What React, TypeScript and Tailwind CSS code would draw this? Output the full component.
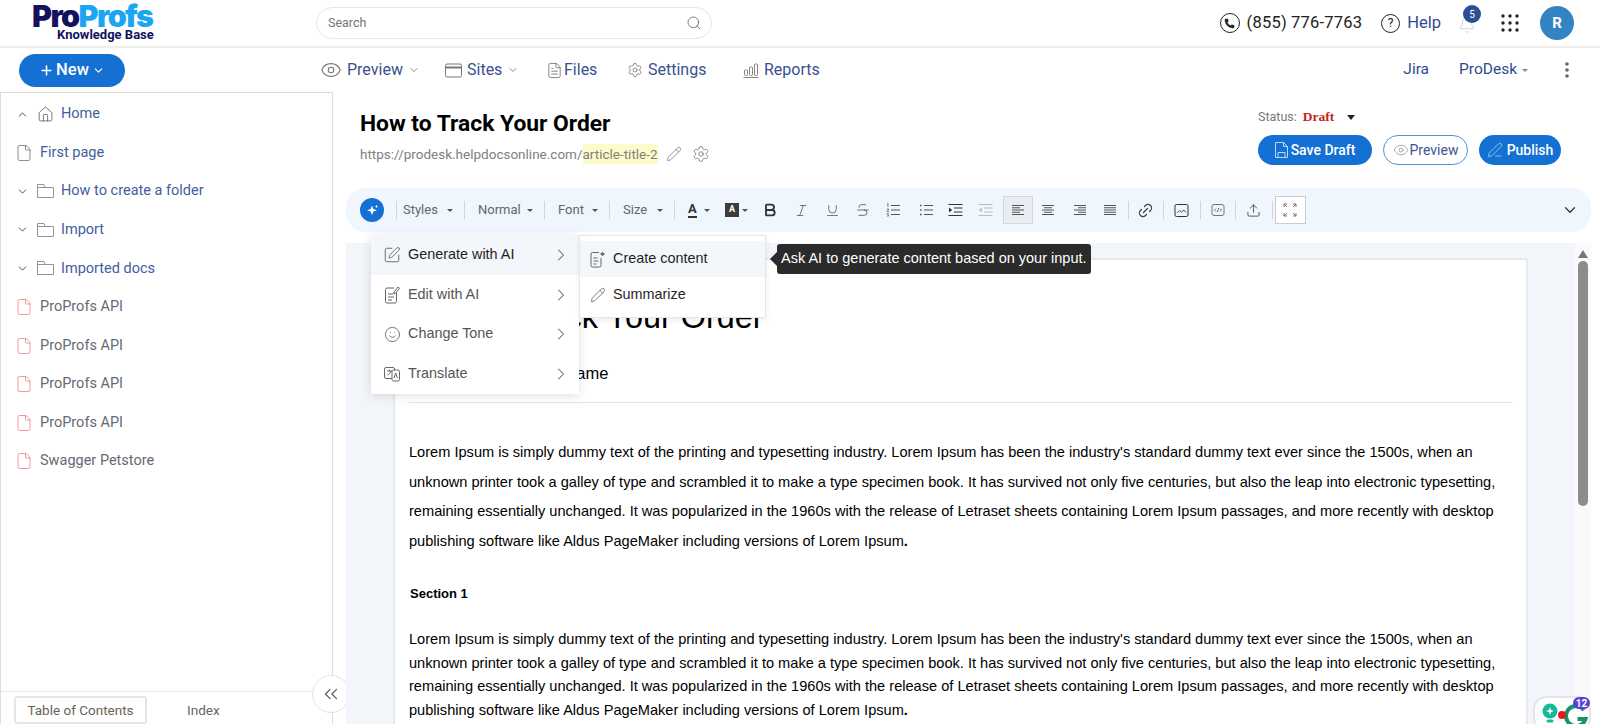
import {
  Bell,
  Bold,
  ChevronDown,
  ChevronRight,
  ChevronUp,
  ChevronsLeft,
  Eye,
  File,
  FileText,
  Home,
  Italic,
  Link2,
  Pencil,
  PenLine,
  Phone,
  Plus,
  Search,
  Settings,
  Smile,
  SquarePen,
  Strikethrough,
  Underline,
  Upload,
} from "lucide-react";

const lorem =
  "Lorem Ipsum is simply dummy text of the printing and typesetting industry. Lorem Ipsum has been the industry's standard dummy text ever since the 1500s, when an unknown printer took a galley of type and scrambled it to make a type specimen book. It has survived not only five centuries, but also the leap into electronic typesetting, remaining essentially unchanged. It was popularized in the 1960s with the release of Letraset sheets containing Lorem Ipsum passages, and more recently with desktop publishing software like Aldus PageMaker including versions of Lorem Ipsum";

function Caret({ className = "" }: { className?: string }) {
  return <span className={`inline-block border-x-[3px] border-t-[3.5px] border-x-transparent border-t-[#555] ${className}`} />;
}

function Header() {
  return (
    <header className="flex h-[48px] shrink-0 items-center border-b-2 border-[#eeeeee] pl-8 pr-[26px]">
      {/* Logo */}
      <div className="mb-[4px] flex w-[284px] shrink-0 flex-col">
        <div className="flex items-center text-[30.5px] font-black leading-[30px] tracking-[-1.6px] font-['Inter',sans-serif]">
          <span className="text-[#14125f]">Pro</span>
          <span className="text-[#1ba6f2]">Profs</span>
        </div>
        <div className="ml-[25px] -mt-[3px] text-[13px] font-bold leading-[14px] text-[#14125f]">Knowledge Base</div>
      </div>
      <div className="flex h-[32px] w-[396px] items-center justify-between rounded-full border border-[#e6e6e6] pl-[11px] pr-[9px] text-[12.5px] text-[#757575]">
        <span>Search</span>
        <Search size={16} strokeWidth={1.25} className="text-[#666]" />
      </div>
      <div className="ml-auto flex items-center">
        <span className="flex h-5 w-5 items-center justify-center rounded-full border border-[#222]">
          <Phone size={11} fill="#222" strokeWidth={1} className="text-[#222]" />
        </span>
        <span className="ml-[7px] text-[16.5px] tracking-[0.2px] text-[#222]">(855) 776-7763</span>
        <span className="ml-[19px] flex h-[19px] w-[19px] items-center justify-center rounded-full border border-[#222] text-[12px] text-[#222]">?</span>
        <span className="ml-[7px] text-[16.5px] text-[#2f4a8f]">Help</span>
        <div className="relative ml-[17px] h-6 w-6">
          <Bell size={18} strokeWidth={1} className="absolute left-0 top-[5px] text-[#c4c4c4]" />
          <span className="absolute left-[5px] top-[-6px] flex h-[18px] w-[18px] items-center justify-center rounded-full bg-[#2c4f94] text-[10px] text-white">5</span>
        </div>
        <svg width="18" height="18" viewBox="0 0 18 18" fill="#222" className="ml-[19px]">
          {[2, 9, 16].flatMap((y) => [2, 9, 16].map((x) => <circle key={`${x}-${y}`} cx={x} cy={y} r="1.7" />))}
        </svg>
        <span className="ml-[21px] flex h-[34px] w-[34px] items-center justify-center rounded-full bg-[#3484c4] text-[15px] font-bold text-white">R</span>
      </div>
    </header>
  );
}

function NavLink({ icon, label, caret, className = "" }: { icon: React.ReactNode; label: string; caret?: boolean; className?: string }) {
  return (
    <div className={`flex items-center ${className}`}>
      {icon}
      <span className="text-[16px] text-[#3b5090]">{label}</span>
      {caret && <ChevronDown size={12} strokeWidth={1.25} className="ml-[5px] text-[#444]" />}
    </div>
  );
}

function SiteIcon() {
  return (
    <svg width="17" height="15" viewBox="0 0 17 15" fill="none" stroke="#777" className="mr-[5px]">
      <rect x="0.5" y="1" width="16" height="13" rx="1.5" />
      <path d="M1 4.5h15" strokeWidth="2" />
    </svg>
  );
}

function ReportsIcon() {
  return (
    <svg width="16" height="15" viewBox="0 0 16 15" fill="none" stroke="#777" strokeWidth="0.9" className="mr-[5px]">
      <rect x="1.5" y="7" width="3" height="5.5" rx="1" />
      <rect x="6.5" y="4" width="3" height="8.5" rx="1" />
      <rect x="11.5" y="1" width="3" height="11.5" rx="1" />
      <path d="M0.5 14.5h15" />
    </svg>
  );
}

function NavBar() {
  return (
    <div className="flex h-[44px] shrink-0 items-center pl-[19px] pr-[31px]">
      <button className="flex h-[33px] w-[106px] items-center justify-center rounded-full bg-[#1570d3] text-[16.5px] font-medium text-white">
        <Plus size={15} strokeWidth={2.5} />
        <span className="ml-[2px]">New</span>
        <ChevronDown size={13} strokeWidth={2} className="ml-[3px]" />
      </button>
      <div className="ml-[195px] flex items-center">
        <NavLink icon={<Eye size={22} strokeWidth={1.25} className="mr-[5px] text-[#777]" />} label="Preview" caret className="w-[125px]" />
        <NavLink icon={<SiteIcon />} label="Sites" caret className="w-[101px]" />
        <NavLink icon={<FileText size={17} strokeWidth={1.25} className="mr-[1px] text-[#777]" />} label="Files" className="w-[81px]" />
        <NavLink icon={<Settings size={16} strokeWidth={1.25} className="mr-[5px] text-[#777]" />} label="Settings" className="w-[116px]" />
        <NavLink icon={<ReportsIcon />} label="Reports" />
      </div>
      <div className="ml-auto flex items-center">
        <span className="text-[15.5px] text-[#2f4a8f]">Jira</span>
        <span className="ml-[30px] text-[15.5px] text-[#2f4a8f]">ProDesk</span>
        <Caret className="ml-[5px] border-t-[#888]" />
        <svg width="4" height="16" viewBox="0 0 4 16" fill="#666" className="ml-[37px]">
          <circle cx="2" cy="2" r="1.8" />
          <circle cx="2" cy="8" r="1.8" />
          <circle cx="2" cy="14" r="1.8" />
        </svg>
      </div>
    </div>
  );
}

function FolderIcon() {
  return (
    <svg width="17" height="14" viewBox="0 0 17 14" fill="none" stroke="#888" strokeWidth="0.9">
      <path d="M.5 13.5V.5h6.5l1 3h8.5v10ZM.5 3.5h7.5" />
    </svg>
  );
}

function FolderRow({ label }: { label: string }) {
  return (
    <div className="flex h-[38.55px] items-center pl-[15px]">
      <ChevronDown size={13} strokeWidth={1.75} className="text-[#444]" />
      <span className="ml-[8px] flex"><FolderIcon /></span>
      <span className="ml-[7px] text-[14.5px] text-[#3f5ea0]">{label}</span>
    </div>
  );
}

function PageRow({ label }: { label: string }) {
  return (
    <div className="flex h-[38.55px] items-center pl-[14px]">
      <File size={18} strokeWidth={1} className="text-[#f0787c]" />
      <span className="ml-[7px] text-[14.5px] text-[#666a73]">{label}</span>
    </div>
  );
}

function Sidebar() {
  return (
    <aside className="relative flex w-[333px] shrink-0 flex-col border-x border-t border-[#dddddd]">
      <div className="flex-1 pt-[2px]">
        <div className="flex h-[38.55px] items-center pl-[15px]">
          <ChevronUp size={13} strokeWidth={1.75} className="text-[#444]" />
          <Home size={17} strokeWidth={1} className="ml-[8px] text-[#444]" />
          <span className="ml-[7px] text-[14.5px] text-[#3f5ea0]">Home</span>
        </div>
        <div className="flex h-[38.55px] items-center pl-[14px]">
          <File size={18} strokeWidth={1} className="text-[#666]" />
          <span className="ml-[7px] text-[14.5px] text-[#3f5ea0]">First page</span>
        </div>
        <FolderRow label="How to create a folder" />
        <FolderRow label="Import" />
        <FolderRow label="Imported docs" />
        <PageRow label="ProProfs API" />
        <PageRow label="ProProfs API" />
        <PageRow label="ProProfs API" />
        <PageRow label="ProProfs API" />
        <PageRow label="Swagger Petstore" />
      </div>
      <div className="flex h-[33px] shrink-0 items-end border-t border-[#e6e6e6] pl-[13px]">
        <div className="flex h-[28px] w-[133px] items-center justify-center rounded-[3px] border-2 border-[#e6e6e6] text-[13.5px] text-[#6b6157]">Table of Contents</div>
        <div className="ml-[40px] flex h-[28px] items-center text-[13.5px] text-[#666]">Index</div>
      </div>
      <div className="absolute bottom-[11px] right-[-18px] flex h-[38px] w-[38px] items-center justify-center rounded-full border border-[#e3e3e3] bg-white">
        <ChevronsLeft size={22} strokeWidth={1.25} className="text-[#555]" />
      </div>
    </aside>
  );
}

function Sep({ className = "" }: { className?: string }) {
  return <span className={`h-[18px] w-px shrink-0 bg-[#d2d6da] ${className}`} />;
}

function DropGroup({ label, width, labelClass = "ml-[13px]" }: { label: string; width: string; labelClass?: string }) {
  return (
    <div className={`flex items-center ${width}`}>
      <Sep />
      <span className={`text-[13px] text-[#666] ${labelClass}`}>{label}</span>
      <Caret className="ml-auto mr-[11px]" />
    </div>
  );
}

function Tool({ width, children, active }: { width: string; children: React.ReactNode; active?: boolean }) {
  return (
    <div className={`flex h-[28px] shrink-0 items-center justify-center text-[#555] ${width} ${active ? "border border-[#d4d8dc] bg-[#e9edf1]" : ""}`}>
      {children}
    </div>
  );
}

// five line paragraph alignment glyph, x1/x2 pairs per line
function LinesIcon({ rows }: { rows: [number, number][] }) {
  return (
    <svg width="14" height="14" viewBox="0 0 14 14" fill="none" stroke="#555" strokeWidth="1">
      {rows.map(([a, b], i) => (
        <path key={i} d={`M${a} ${2.5 + i * 2.25}H${b}`} />
      ))}
    </svg>
  );
}

function ListIcon({ numbered }: { numbered?: boolean }) {
  return (
    <svg width="14" height="14" viewBox="0 0 14 14" fill="none" stroke="#555" strokeWidth="1">
      <path d="M5 2.5h9M5 7h9M5 11.5h9" />
      {numbered ? (
        <path d="M1 1l1-.5V4M.8 6h2L1 8.5h2M.8 10.5h2l-1 1 1 1.5H.8" strokeWidth="0.7" />
      ) : (
        <path d="M1 2.5h1.6M1 7h1.6M1 11.5h1.6" strokeWidth="1.4" />
      )}
    </svg>
  );
}

function IndentIcon({ out }: { out?: boolean }) {
  const color = out ? "#b9bdc1" : "#333";
  return (
    <svg width="15" height="14" viewBox="0 0 15 14" fill="none" stroke={color} strokeWidth="1">
      <path d="M.5 1.5h14M6 5h8.5M6 9h8.5M.5 12.5h14" />
      <path d={out ? "M4 4.5v5L.8 7Z" : "M1 4.5v5L4.2 7Z"} fill={color} stroke="none" />
    </svg>
  );
}

function Toolbar() {
  return (
    <div className="flex h-[44px] shrink-0 items-center rounded-[20px] bg-[#f0f6fe] pl-[14px] pr-[12px]">
      <span className="mr-[12px] flex h-6 w-6 shrink-0 items-center justify-center rounded-full bg-[#1570d3]">
        <svg width="13" height="13" viewBox="0 0 13 13" fill="white">
          <path d="M6 1.5 7.3 5 11 6.3 7.3 7.6 6 11.3 4.7 7.6 1 6.3 4.7 5Z" />
          <path d="M10.5 .8l.5 1.2 1.2.5-1.2.5-.5 1.2-.5-1.2-1.2-.5 1.2-.5Z" />
        </svg>
      </span>
      <DropGroup label="Styles" width="w-[68px]" labelClass="ml-[6px]" />
      <DropGroup label="Normal" width="w-[80px]" />
      <DropGroup label="Font" width="w-[65px]" />
      <DropGroup label="Size" width="w-[65px]" />
      <div className="flex w-[45px] shrink-0 items-center">
        <Sep />
        <span className="ml-[13px] border-b-2 border-[#333] text-[13px] font-bold leading-[14px] text-[#333]">A</span>
        <Caret className="ml-[7px]" />
      </div>
      <div className="flex w-[36px] shrink-0 items-center">
        <span className="ml-[6px] flex h-[14px] w-[14px] items-center justify-center bg-[#3c3c3c] text-[9px] font-bold text-white">A</span>
        <Caret className="ml-[3px]" />
      </div>
      <Tool width="w-[30.5px]"><Bold size={16} strokeWidth={2.75} className="text-[#333]" /></Tool>
      <Tool width="w-[31px]"><Italic size={15} strokeWidth={1.25} /></Tool>
      <Tool width="w-[31px]"><Underline size={15} strokeWidth={1.25} /></Tool>
      <Tool width="w-[30px]"><Strikethrough size={16} strokeWidth={1.25} /></Tool>
      <Tool width="w-[31px]"><ListIcon numbered /></Tool>
      <Tool width="w-[34px]"><ListIcon /></Tool>
      <Tool width="w-[26px]"><IndentIcon /></Tool>
      <Tool width="w-[34px]"><IndentIcon out /></Tool>
      <Tool width="w-[30px]" active><LinesIcon rows={[[1, 13], [1, 9], [1, 13], [1, 9], [1, 13]]} /></Tool>
      <Tool width="w-[31px]"><LinesIcon rows={[[1, 13], [3, 11], [1, 13], [3, 11], [1, 13]]} /></Tool>
      <Tool width="w-[32px]"><LinesIcon rows={[[1, 13], [5, 13], [1, 13], [5, 13], [1, 13]]} /></Tool>
      <Tool width="w-[29px]"><LinesIcon rows={[[1, 13], [1, 13], [1, 13], [1, 13], [1, 13]]} /></Tool>
      <Sep className="ml-[3px]" />
      <Tool width="w-[34px]"><Link2 size={17} strokeWidth={1.75} className="-rotate-45 text-[#444]" /></Tool>
      <Sep />
      <Tool width="w-[36px]">
        <svg width="15" height="15" viewBox="0 0 15 15" fill="none" stroke="#333" strokeWidth="1">
          <rect x="1" y="1.5" width="13" height="12" rx="1.5" />
          <path d="M3 10l2.5-2.5 2 1.5L10 7l2 2.5" strokeWidth="0.8" />
        </svg>
      </Tool>
      <Sep />
      <Tool width="w-[34px]">
        <svg width="14" height="14" viewBox="0 0 14 14" fill="none" stroke="#666" strokeWidth="0.9">
          <rect x="1" y="1.5" width="12" height="11" rx="2" />
          <path d="M5 5.5 3.5 7 5 8.5M9 5.5 10.5 7 9 8.5M7.7 5 6.3 9" />
        </svg>
      </Tool>
      <Sep />
      <Tool width="w-[36px]"><Upload size={15} strokeWidth={1.25} className="text-[#333]" /></Tool>
      <Sep />
      <div className="ml-[2px] flex h-[28px] w-[31px] shrink-0 items-center justify-center border border-[#cccccc] bg-white">
        <svg width="14" height="14" viewBox="0 0 14 14" fill="none" stroke="#666" strokeWidth="0.9">
          <path d="M1 4V1h3M1 1l3 3M13 4V1h-3M13 1l-3 3M1 10v3h3M1 13l3-3M13 10v3h-3M13 13l-3-3" />
        </svg>
      </div>
      <ChevronDown size={18} strokeWidth={1.75} className="ml-auto text-[#333]" />
    </div>
  );
}

function MenuRow({ icon, label, active, dark }: { icon: React.ReactNode; label: string; active?: boolean; dark?: boolean }) {
  return (
    <div className={`flex h-[39.7px] items-center pl-[12px] pr-[8px] ${active ? "bg-[#f3f6fa]" : ""}`}>
      <span className="flex w-[18px] justify-center text-[#666]">{icon}</span>
      <span className={`ml-[7px] text-[14.4px] ${dark ? "text-[#1f1f1f]" : "text-[#555]"}`}>{label}</span>
      <ChevronRight size={20} strokeWidth={1.25} className="ml-auto text-[#666]" />
    </div>
  );
}

function FileEditIcon() {
  return (
    <svg width="17" height="18" viewBox="0 0 17 18" fill="none" stroke="#666" strokeWidth="1">
      <path d="M10 2H3a1.5 1.5 0 0 0-1.5 1.5v12A1.5 1.5 0 0 0 3 17h8a1.5 1.5 0 0 0 1.5-1.5V7" />
      <path d="M4 8h5M4 11h6M4 14h4M10 6l4-5 1.5 1.3-4 5-1.8.4Z" />
    </svg>
  );
}

function TranslateIcon() {
  return (
    <svg width="16" height="16" viewBox="0 0 16 16" fill="none" stroke="#666" strokeWidth="1">
      <rect x="0.5" y="1.5" width="10" height="11" rx="1.5" />
      <rect x="8" y="4" width="7.5" height="11" rx="1.5" fill="white" />
      <path d="M3 5h5M5.5 3.5V5M3.5 9C5.5 8 6.5 6.5 7 5M10 12l1.7-5 1.7 5" />
    </svg>
  );
}

function CreateIcon() {
  return (
    <svg width="15" height="17" viewBox="0 0 15 17" fill="none" stroke="#666" strokeWidth="1">
      <path d="M9 1.5H2.5A1.5 1.5 0 0 0 1 3v11.5A1.5 1.5 0 0 0 2.5 16h7a1.5 1.5 0 0 0 1.5-1.5V7" />
      <path d="M3.5 7h4M3.5 10h5M3.5 13h3" />
      <path d="M12.5 1l.5 1.5L14.5 3l-1.5.5-.5 1.5-.5-1.5L10.5 3l1.5-.5Z" fill="#666" />
    </svg>
  );
}

function AiMenu() {
  return (
    <div className="absolute left-[38px] top-[143px] flex items-start font-['Liberation_Sans',sans-serif]">
      <div className="w-[208px] bg-white shadow-[0_2px_10px_rgba(0,0,0,0.12)]">
        <MenuRow icon={<SquarePen size={18} strokeWidth={1.25} />} label="Generate with AI" active dark />
        <MenuRow icon={<FileEditIcon />} label="Edit with AI" />
        <MenuRow icon={<Smile size={17} strokeWidth={1.25} />} label="Change Tone" />
        <MenuRow icon={<TranslateIcon />} label="Translate" />
      </div>
      <div className="w-[187px] border border-[#e6e6e6] bg-white pb-[4px] pt-[5px] shadow-[0_2px_6px_rgba(0,0,0,0.08)]">
        <div className="flex h-[36px] items-center bg-[#f3f6fa] pl-[10px]">
          <CreateIcon />
          <span className="ml-[8px] text-[14.4px] text-[#1f1f1f]">Create content</span>
        </div>
        <div className="flex h-[36px] items-center pl-[10px]">
          <Pencil size={16} strokeWidth={1.25} className="text-[#666]" />
          <span className="ml-[7px] text-[14.4px] text-[#1f1f1f]">Summarize</span>
        </div>
      </div>
      <div className="relative ml-[11px] mt-[9px] flex h-[30px] w-[314px] items-center whitespace-nowrap rounded-[3px] bg-[#2b2b2b] pl-[4px] text-[14.5px] text-white">
        <span className="absolute left-[-7px] top-[8px] border-y-[7px] border-r-[7px] border-y-transparent border-r-[#2b2b2b]" />
        Ask AI to generate content based on your input.
      </div>
    </div>
  );
}

function Document() {
  return (
    <div className="relative flex min-h-0 flex-1 pt-[11px]">
      <div className="flex-1 overflow-hidden bg-[#f2f6fa] pl-[47px] pr-[47px] pt-[15px]">
        <div className="h-[600px] overflow-hidden rounded-t-[3px] border-2 border-[#e6e9ee] bg-white pl-[14px] pr-[13px] font-['Liberation_Sans',sans-serif] text-black">
          <h1 className="mt-[39px] whitespace-nowrap text-[32.4px] leading-[36px]">How to Track Your Order</h1>
          <h2 className="mt-[28px] h-[39px] text-[16.5px] leading-[20px]">Your Articles Section Name</h2>
          <div className="h-px bg-[#e4e4e4]" />
          <p className="mt-[35px] text-[14.6px] leading-[29.7px]">{lorem}<strong>.</strong></p>
          <p className="mt-[25px] pl-px text-[13px] font-bold leading-[24px]">Section 1</p>
          <p className="mt-[22px] text-[14.6px] leading-[23.7px]">{lorem}<strong>.</strong></p>
        </div>
      </div>
      {/* Scrollbar */}
      <div className="flex w-[16px] shrink-0 flex-col items-center bg-[#fafafa] pt-[7px]">
        <span className="border-x-[5.5px] border-b-[8px] border-x-transparent border-b-[#777]" />
        <span className="mt-[3px] h-[245px] w-[10px] rounded-full bg-[#8c8c8c]" />
      </div>
      {/* Grammarly badge */}
      <div className="absolute bottom-[-7px] right-0 flex h-[35px] w-[58px] items-start rounded-[13px] border-2 border-[#e4e4ea] bg-white pl-[7px] pt-[5px]">
        <svg width="17" height="22" viewBox="0 0 17 22" className="shrink-0">
          <circle cx="8" cy="8" r="7.5" fill="#15b89a" />
          <path d="M8 4l1 3 3 1-3 1-1 3-1-3-3-1 3-1Z" fill="white" />
          <rect x="4.5" y="16.5" width="7" height="3" rx="1.5" fill="#15b89a" />
        </svg>
        <span className="z-10 ml-[-1px] mt-[8px] h-[8px] w-[8px] shrink-0 rounded-full bg-[#e6191e]" />
        <svg width="25" height="25" viewBox="0 0 25 25" fill="none" stroke="#15936f" strokeWidth="4" className="ml-[-3px] shrink-0">
          <path d="M21 7a10 10 0 1 0 1.5 9h-8" />
        </svg>
        <span className="absolute right-[-1px] top-[-1px] flex h-[12px] w-[17px] items-center justify-center rounded-full bg-[#5b3fd6] text-[10px] font-bold text-white">12</span>
      </div>
    </div>
  );
}

function Main() {
  return (
    <main className="relative z-10 flex min-w-0 flex-1 flex-col pl-[13px] pr-[9px]">
      <div className="flex h-[96px] shrink-0 justify-between pl-[14px] pr-[30px]">
        <div className="pt-[14px]">
          <h1 className="text-[22.8px] font-bold leading-[36px] text-black">How to Track Your Order</h1>
          <div className="mt-[2px] flex items-center text-[13.5px] leading-[20px] text-[#808080]">
            <span>https://prodesk.helpdocsonline.com/</span>
            <span className="bg-[#fdfbc9]">article-title-2</span>
            <Pencil size={16} strokeWidth={1} className="ml-[8px] text-[#666]" />
            <Settings size={18} strokeWidth={1} className="ml-[10px] text-[#666]" />
          </div>
        </div>
        <div className="pt-[17px]">
          <div className="flex h-[16px] items-center text-[12.5px] text-[#777]">
            <span>Status:</span>
            <span className="ml-[6px] font-['Liberation_Serif',serif] text-[13.5px] font-bold text-[#c5261a]">Draft</span>
            <span className="ml-[13px] border-x-[4px] border-t-[5px] border-x-transparent border-t-[#222]" />
          </div>
          <div className="mt-[10px] flex items-center gap-[11px]">
            <button className="flex h-[30px] w-[114px] items-center justify-center rounded-full bg-[#1570d3] text-[14px] font-medium text-white">
              <svg width="13" height="16" viewBox="0 0 13 16" fill="none" stroke="#cfe2f7" strokeWidth="0.9" className="mr-[3px]">
                <path d="M.5.5h8l4 4v11H.5ZM8.5.5v4h4M3 15.5v-5h7v5" />
              </svg>
              Save Draft
            </button>
            <button className="flex h-[30px] w-[85px] items-center justify-center rounded-full border border-[#4d94d6] text-[14px] text-[#3f5592]">
              <Eye size={16} strokeWidth={1} className="mr-[1px] text-[#888]" />
              Preview
            </button>
            <button className="flex h-[30px] w-[82px] items-center justify-center rounded-full bg-[#1570d3] text-[14px] font-medium text-white">
              <PenLine size={16} strokeWidth={1} className="mr-[4px] text-[#cfe2f7]" />
              Publish
            </button>
          </div>
        </div>
      </div>
      <Toolbar />
      <Document />
      <AiMenu />
    </main>
  );
}

export default function App() {
  return (
    <div className="flex h-[724px] w-[1600px] flex-col overflow-hidden bg-white font-['Roboto',sans-serif]">
      <Header />
      <NavBar />
      <div className="flex min-h-0 flex-1">
        <Sidebar />
        <Main />
      </div>
    </div>
  );
}
